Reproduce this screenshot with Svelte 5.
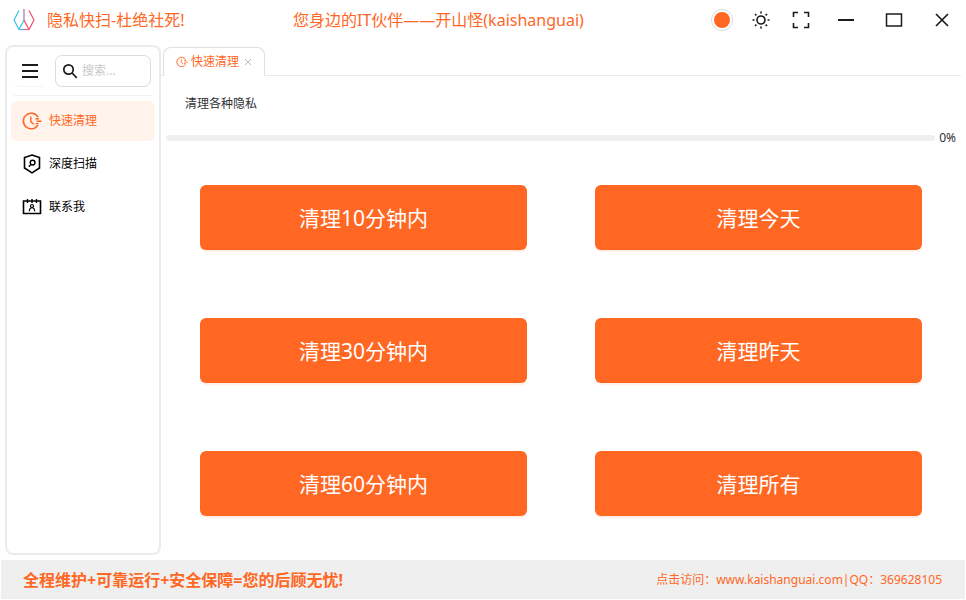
<script lang="ts">
	type Icon = 'clock' | 'shield' | 'contact';

	const menu: { id: string; label: string; icon: Icon }[] = [
		{ id: 'quick', label: '快速清理', icon: 'clock' },
		{ id: 'deep', label: '深度扫描', icon: 'shield' },
		{ id: 'contact', label: '联系我', icon: 'contact' }
	];

	const actions = [
		'清理10分钟内',
		'清理今天',
		'清理30分钟内',
		'清理昨天',
		'清理60分钟内',
		'清理所有'
	];

	let active = $state('quick');
	let query = $state('');
	let progress = $state(0);
</script>

{#snippet icon(name: Icon)}
	<svg class="icon" viewBox="0 0 20 20" aria-hidden="true">
		{#if name === 'clock'}
			<path d="M16 6.2A7.8 7.8 0 1 0 16 13.8" />
			<path d="M8.8 5.5v5.3l3 2.4M13.5 7.8h3.5M14.5 10.2h5M13.5 12.6h3" stroke-width="1.4" />
		{:else if name === 'shield'}
			<path d="M10 1 17.5 3.6V14L10 18.8 2.5 14V3.6Z" />
			<circle cx="10.6" cy="8.6" r="2.4" stroke-width="1.4" />
			<path d="m9 10.4-2.2 2.4" stroke-width="1.4" />
		{:else}
			<path d="M1.5 4h17v12.5h-17Z" />
			<path d="M5.5 2v4M10 2v4M14.5 2v4" stroke-width="1.4" />
			<circle cx="10" cy="9" r="1.5" stroke-width="1.2" />
			<path d="M7.4 14.2c0-4.6 5.2-4.6 5.2 0" stroke-width="1.2" />
		{/if}
	</svg>
{/snippet}

<div class="window">
	<header class="titlebar">
		<svg class="logo" viewBox="0 0 22 22" fill="none" aria-hidden="true">
			<path d="M6 1.5 1 11l5 9.5 5-9.5" stroke="#35c5ef" />
			<path d="M16 1.5 21 11l-5 9.5-5-9.5" stroke="#f8496e" />
			<path d="M11 0v11" stroke="#a86fa8" />
			<path d="M6 20.5h5" stroke="#58b5df" />
			<path d="M11 20.5h5" stroke="#df6393" />
		</svg>
		<h1>隐私快扫-杜绝社死!</h1>
		<p class="slogan">您身边的IT伙伴——开山怪(kaishanguai)</p>
		<div class="tools">
			<button class="color" aria-label="主题色"><span></span></button>
			<button aria-label="亮色模式">
				<svg viewBox="0 0 18 18" aria-hidden="true">
					<circle cx="9" cy="9" r="4" />
					<path d="M9 0.5v2M9 15.5v2M0.5 9h2M15.5 9h2M3 3l1.4 1.4M13.6 13.6 15 15M3 15l1.4-1.4M13.6 4.4 15 3" />
				</svg>
			</button>
			<button aria-label="全屏">
				<svg viewBox="0 0 18 18" aria-hidden="true">
					<path d="M1.5 6V1.5H6M12 1.5h4.5V6M16.5 12v4.5H12M6 16.5H1.5V12" />
				</svg>
			</button>
		</div>
		<div class="controls">
			<button aria-label="最小化">
				<svg viewBox="0 0 18 18" aria-hidden="true"><path d="M1 9h16" /></svg>
			</button>
			<button aria-label="最大化">
				<svg viewBox="0 0 18 18" aria-hidden="true"><path d="M1.5 3h15v12h-15Z" stroke-width="1.5" /></svg>
			</button>
			<button aria-label="关闭">
				<svg viewBox="0 0 18 18" aria-hidden="true"><path d="m3 3 12 12M15 3 3 15" stroke-width="1.7" /></svg>
			</button>
		</div>
	</header>

	<div class="body">
		<aside class="sidebar">
			<div class="side-head">
				<button class="toggle" aria-label="菜单">
					<svg viewBox="0 0 18 18" aria-hidden="true"><path d="M1 3h16M1 9h16M1 15h16" /></svg>
				</button>
				<label class="search">
					<svg viewBox="0 0 16 16" aria-hidden="true">
						<circle cx="6.5" cy="6.5" r="4.7" />
						<path d="m10 10 4.8 4.8" />
					</svg>
					<input type="text" bind:value={query} placeholder="搜索..." aria-label="搜索" />
				</label>
			</div>
			<nav>
				{#each menu as item (item.id)}
					<button class:active={active === item.id} onclick={() => (active = item.id)}>
						{@render icon(item.icon)}
						{item.label}
					</button>
				{/each}
			</nav>
		</aside>

		<main>
			<div class="tabs">
				<div class="tab">
					<button class="tab-name">
						{@render icon('clock')}
						快速清理
					</button>
					<button class="tab-close" aria-label="关闭标签">
						<svg viewBox="0 0 8 8" aria-hidden="true"><path d="m1 1 6 6M7 1 1 7" /></svg>
					</button>
				</div>
			</div>
			<p class="status">清理各种隐私</p>
			<div class="progress-row">
				<progress id="clean-progress" max="100" value={progress}></progress>
				<label for="clean-progress">{progress}%</label>
			</div>
			<div class="actions">
				{#each actions as action (action)}
					<button>{action}</button>
				{/each}
			</div>
		</main>
	</div>

	<footer>
		<strong>全程维护+可靠运行+安全保障=您的后顾无忧!</strong>
		<p>点击访问：<a href="http://www.kaishanguai.com">www.kaishanguai.com</a>|QQ：<span>369628105</span></p>
	</footer>
</div>

<style>
	:global(body) {
		margin: 0;
		background: #fff;
	}
	.window {
		--primary: #ff6723;
		--line: #ebebeb;
		box-sizing: border-box;
		display: flex;
		flex-direction: column;
		min-height: 100vh;
		padding: 0 1px 1px 1px;
		font-family: 'Noto Sans', 'Noto Sans CJK SC', sans-serif;
		font-size: 12px;
		line-height: 16px;
		color: #303133;
	}
	h1,
	p {
		margin: 0;
	}
	button {
		padding: 0;
		border: 0;
		background: none;
		color: inherit;
		font: inherit;
		cursor: pointer;
	}
	svg {
		display: block;
		flex-shrink: 0;
		fill: none;
		stroke: #1c1c1c;
		stroke-width: 2;
	}

	/* title bar */
	.titlebar {
		display: flex;
		align-items: center;
		height: 40px;
		padding: 0 14px 0 12px;
		color: var(--primary);
		font-size: 16px;
		line-height: 24px;
		white-space: nowrap;
	}
	.logo {
		width: 22px;
		height: 22px;
		stroke-width: 1.2;
	}
	.logo path {
		stroke-linejoin: round;
	}
	h1 {
		width: 246px;
		margin-left: 12px;
		font-size: 16px;
		font-weight: 400;
	}
	.tools {
		display: flex;
		align-items: center;
		gap: 20px;
		margin-left: auto;
	}
	.tools svg {
		width: 18px;
		height: 18px;
		stroke-width: 1.6;
	}
	.tools button {
		width: 20px;
		display: flex;
		justify-content: center;
	}
	.tools .color {
		width: 22px;
		height: 22px;
		margin-right: -2px;
		align-items: center;
		border: 1px solid #dcdcdc;
		border-radius: 50%;
	}
	.color span {
		width: 16px;
		height: 16px;
		border-radius: 50%;
		background: var(--primary);
	}
	.controls {
		display: flex;
		gap: 30px;
		margin-left: 26px;
	}
	.controls svg {
		width: 18px;
		height: 18px;
	}

	/* sidebar */
	.body {
		flex: 1;
		display: flex;
		padding: 5px 4px;
	}
	.sidebar {
		box-sizing: border-box;
		flex: 0 0 156px;
		border: 2px solid var(--line);
		border-radius: 8px;
		padding: 0 4px;
	}
	.side-head {
		display: flex;
		align-items: center;
		height: 48px;
		margin: 0 3px;
		border-bottom: 1px solid #f2f2f2;
	}
	.toggle {
		width: 32px;
		height: 32px;
		border-bottom: 1px solid #f4f4f4;
		border-radius: 6px;
	}
	.toggle svg {
		width: 18px;
		height: 18px;
		margin: 0 auto;
	}
	.search {
		box-sizing: border-box;
		flex: 1;
		display: flex;
		align-items: center;
		gap: 4px;
		height: 32px;
		margin-left: 9px;
		margin-right: 1px;
		padding: 0 6px;
		border: 1px solid #dcdcdc;
		border-radius: 7px;
	}
	.search svg {
		width: 16px;
		height: 16px;
		stroke-width: 1.7;
	}
	.search input {
		min-width: 0;
		width: 100%;
		padding: 0;
		border: 0;
		outline: 0;
		background: none;
		font: inherit;
	}
	.search input::placeholder {
		color: #c8c8c8;
	}
	nav {
		display: flex;
		flex-direction: column;
		gap: 3px;
		padding-top: 5px;
	}
	nav button {
		display: flex;
		align-items: center;
		gap: 7px;
		height: 40px;
		padding-left: 11px;
		border-radius: 6px;
		color: #000;
	}
	nav .active {
		background: #fff3eb;
		color: var(--primary);
	}
	.icon {
		width: 20px;
		height: 20px;
		stroke: currentColor;
		stroke-width: 1.6;
	}

	/* content */
	main {
		flex: 1;
		min-width: 0;
	}
	.tabs {
		display: flex;
		padding: 2px 0 0 2px;
		border-bottom: 1px solid var(--line);
	}
	.tab {
		box-sizing: border-box;
		display: flex;
		align-items: center;
		gap: 5px;
		height: 29px;
		margin-bottom: -1px;
		padding: 0 12px;
		border: 1px solid #e0e0e0;
		border-bottom: 0;
		border-radius: 8px 8px 0 0;
		background: #fff;
	}
	.tab-name {
		display: flex;
		align-items: center;
		gap: 3px;
		color: var(--primary);
	}
	.tab-name .icon {
		width: 12px;
		height: 12px;
	}
	.tab-close svg {
		width: 8px;
		height: 8px;
		stroke: #b8b8b8;
		stroke-width: 1;
	}
	.status {
		padding: 20px 24px;
	}
	.progress-row {
		display: flex;
		align-items: center;
		gap: 4px;
		padding: 0 5px;
		margin-top: -2px;
	}
	progress {
		appearance: none;
		flex: 1;
		min-width: 0;
		height: 6px;
		border: 0;
		border-radius: 3px;
		background: #efefef;
		overflow: hidden;
	}
	progress::-webkit-progress-bar {
		background: #efefef;
	}
	progress::-webkit-progress-value {
		background: var(--primary);
	}
	.actions {
		display: grid;
		grid-template-columns: 1fr 1fr;
		gap: 68px;
		padding: 39px;
	}
	.actions button {
		height: 65px;
		border-radius: 6px;
		background: var(--primary);
		box-shadow: 0 2px 1px #ffeee6;
		color: #fff;
		font-size: 21px;
		line-height: 28px;
	}

	footer {
		display: flex;
		align-items: center;
		justify-content: space-between;
		height: 39px;
		padding: 0 23px 0 22px;
		background: #efefef;
		color: var(--primary);
		white-space: nowrap;
	}
	footer strong {
		font-size: 16px;
		line-height: 24px;
	}
	footer a {
		color: inherit;
		text-decoration: none;
	}
</style>
